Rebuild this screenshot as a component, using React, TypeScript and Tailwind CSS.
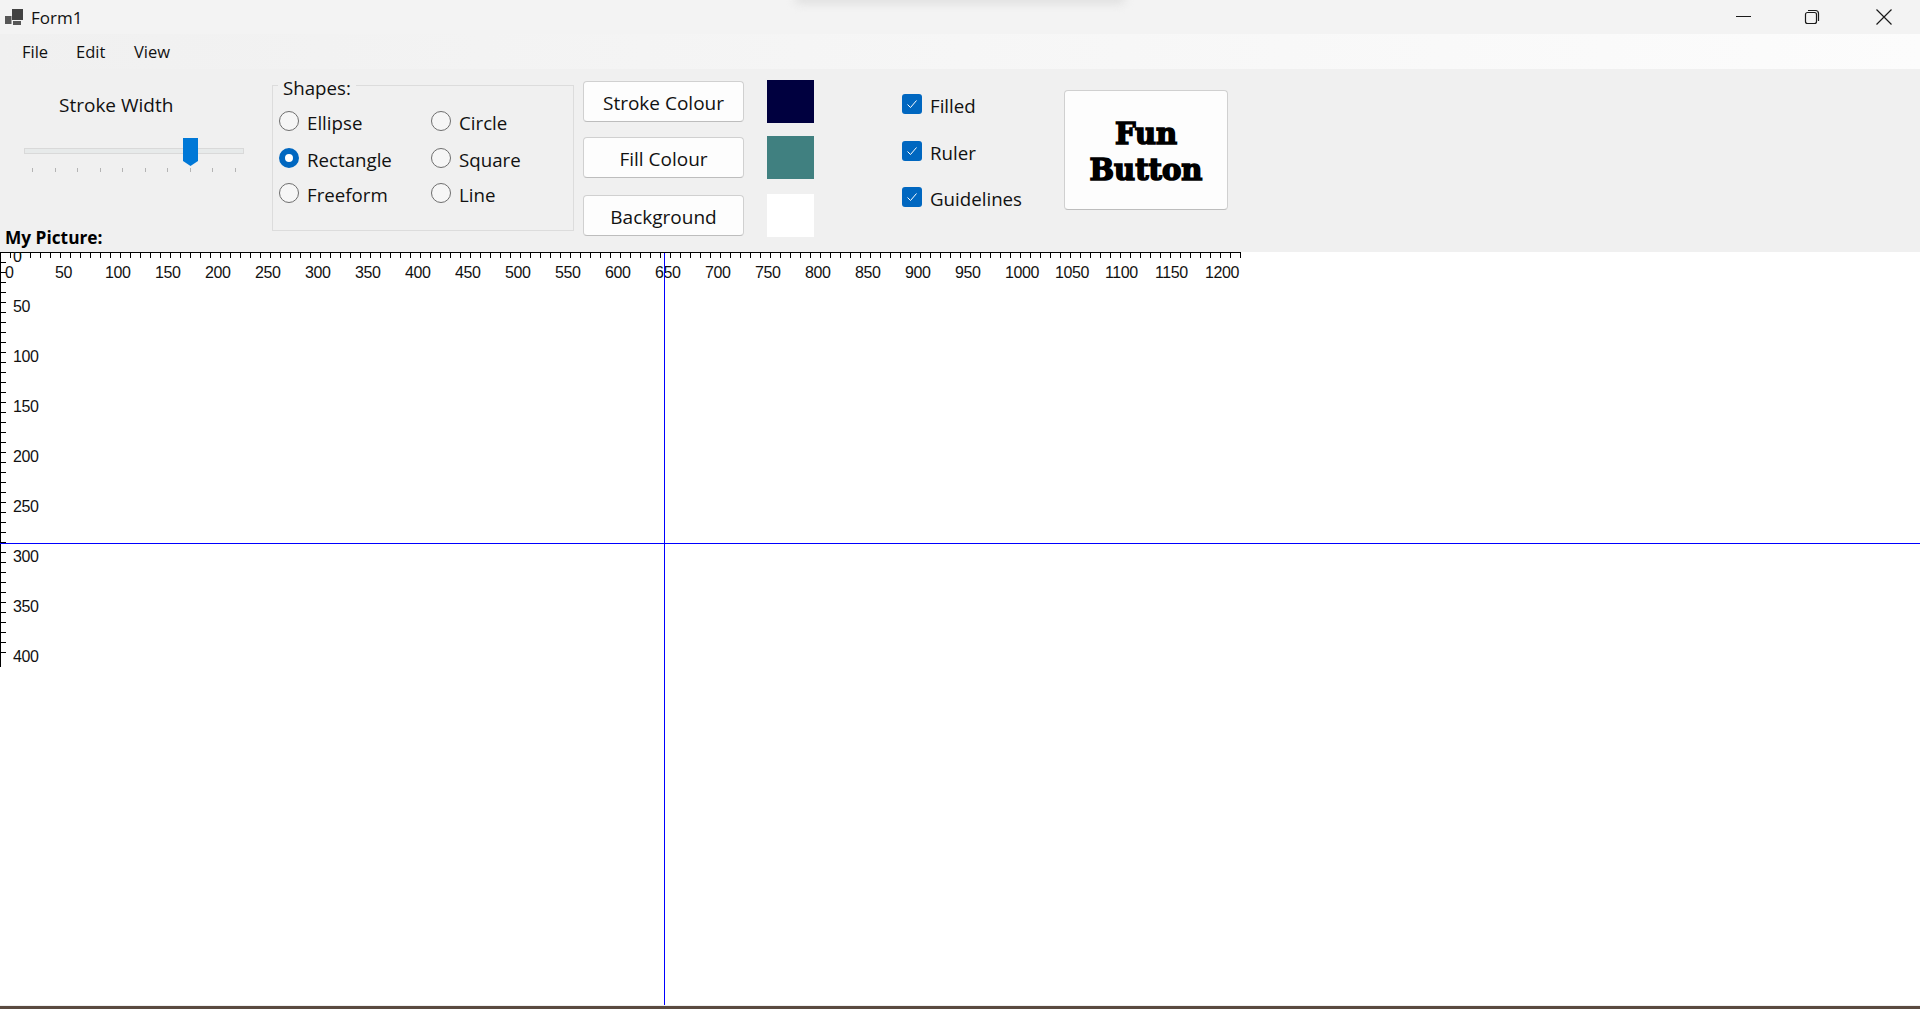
import type { ReactNode } from 'react';

const uiFont = "font-['Open_Sans','Noto_Sans',sans-serif]";

const xLabels = Array.from({ length: 25 }, (_, i) => i * 50);
const yLabels = Array.from({ length: 9 }, (_, i) => i * 50);

function FormIcon() {
  return (
    <svg width="19" height="17" viewBox="0 0 19 17" className="ml-[5px] mr-[7px]">
      <rect x="7" y="0" width="11" height="11" fill="#424242" />
      <rect x="0" y="7" width="6.5" height="8" fill="#565656" />
      <rect x="8" y="12" width="8" height="4" fill="#565656" />
    </svg>
  );
}

function WindowControls() {
  return (
    <svg width="170" height="20" viewBox="0 0 170 20" className="ml-auto mr-[14px]" fill="none" stroke="#1a1a1a">
      <path d="M0 9.5H15" />
      <rect x="69.5" y="5.5" width="11" height="11" rx="2" strokeWidth="1.2" />
      <path d="M72 3.5h7.5a3 3 0 0 1 3 3V14" strokeWidth="1.2" />
      <path d="M140.5 2.5l15 15M155.5 2.5l-15 15" strokeWidth="1.2" />
    </svg>
  );
}

function StrokeSlider() {
  return (
    <div className="ml-[24px] mt-[30px] w-[220px]">
      <div className="relative h-[6px] border border-[#d9d9d9] bg-[#e7eaea]">
        <svg width="15" height="28" viewBox="0 0 15 28" className="absolute left-[158px] top-[-11px]">
          <path d="M0 0H15V23L7.5 28L0 23Z" fill="#0078d7" />
        </svg>
      </div>
      <div className="mt-[14px] flex justify-between pl-[8px] pr-[8px]">
        {Array.from({ length: 10 }, (_, i) => (
          <div key={i} className="h-[4px] w-px bg-[#b4b4b4]" />
        ))}
      </div>
    </div>
  );
}

function ShapeRadio({ label, checked }: { label: string; checked?: boolean }) {
  return (
    <div className="flex h-[20px] items-center">
      {checked ? (
        <div className="h-[20px] w-[20px] rounded-full border-[6px] border-[#0067c0] bg-white" />
      ) : (
        <div className="h-[20px] w-[20px] rounded-full border border-[#6e6e6e] bg-[#f6f6f6]" />
      )}
      <span className="ml-[8px] mt-[4px] text-[18.7px] leading-[24px] text-[#111]">{label}</span>
    </div>
  );
}

function ActionRow({ label, swatch }: { label: string; swatch: string }) {
  return (
    <div className="flex h-[43px] items-center gap-[23px]">
      <button className="h-[41px] w-[161px] rounded-[4px] border border-[#d0d0d0] border-b-[#bdbdbd] bg-[#fdfdfd] pt-[3px] text-[19px] text-[#111]">
        {label}
      </button>
      <div className={`h-[43px] w-[47px] ${swatch}`} />
    </div>
  );
}

function CheckRow({ children }: { children: ReactNode }) {
  return (
    <div className="flex h-[20px] items-center">
      <div className="flex h-[20px] w-[20px] items-center justify-center rounded-[3px] bg-[#0067c0]">
        <svg width="12" height="12" viewBox="0 0 12 12" fill="none" stroke="#fff" strokeWidth="1">
          <path d="M1.5 6.5L4.5 9.5L10.5 2.5" />
        </svg>
      </div>
      <span className="ml-[8px] mt-[3px] text-[18.7px] leading-[24px] text-[#111]">{children}</span>
    </div>
  );
}

function RulerAndGuides() {
  return (
    <svg width="1920" height="754" viewBox="0 0 1920 754" className="absolute inset-0">
      <g shapeRendering="crispEdges" stroke="#000" fill="none">
        <path d="M0 0.5H1241" />
        <path d="M0.5 0V415" />
        {Array.from({ length: 125 }, (_, i) => (
          <path key={i} d={`M${i * 10 + 0.5} 0V6`} />
        ))}
        {Array.from({ length: 41 }, (_, i) => (
          <path key={i} d={`M0 ${i * 10 + 0.5}H6`} />
        ))}
      </g>
      <g className="font-['Liberation_Sans',Arial,sans-serif] text-[16px] tracking-[-0.4px]" fill="#111">
        {xLabels.map((v) => (
          <text key={v} x={v + 5} y={26}>
            {v}
          </text>
        ))}
        {yLabels.map((v) => (
          <text key={v} x={13} y={v + 10}>
            {v}
          </text>
        ))}
      </g>
      <g shapeRendering="crispEdges" stroke="#0000ff">
        <path d="M664.5 1V753" />
        <path d="M0 291.5H1920" />
      </g>
    </svg>
  );
}

export default function App() {
  return (
    <div className={`relative flex h-[1009px] w-[1920px] flex-col overflow-hidden bg-white text-black ${uiFont}`}>
      {/* shadow peeking in at the top of the window */}
      <div className="absolute left-[795px] top-[-6px] h-[9px] w-[330px] rounded-full bg-[#dcdcdc] blur-[5px]" />

      <div className="flex h-[34px] items-center bg-[#f3f3f3]">
        <FormIcon />
        <span className="pt-px text-[17px] text-[#111]">Form1</span>
        <WindowControls />
      </div>

      <div className="flex h-[35px] items-center bg-gradient-to-r from-[#f0f0f0] to-[#fcfcfc] pl-[22px] pt-[2px] text-[16.5px] text-[#111]">
        <span className="w-[54px]">File</span>
        <span className="w-[58px]">Edit</span>
        <span>View</span>
      </div>

      <div className="flex h-[183px] bg-[#f0f0f0]">
        <div className="flex w-[272px] flex-col">
          <div className="ml-[59px] mt-[23px] h-[26px] text-[19px] leading-[26px] text-[#111]">Stroke Width</div>
          <StrokeSlider />
          <div className="ml-[5px] mt-auto pb-[2px] text-[17.3px] font-bold leading-[24px]">My Picture:</div>
        </div>

        <div className="relative mt-[16px] h-[146px] w-[302px] border border-[#dcdcdc]">
          <span className="absolute left-[5px] top-[-10px] bg-[#f0f0f0] px-[5px] text-[18.7px] leading-[24px] text-[#111]">
            Shapes:
          </span>
          <div className="grid grid-cols-[152px_1fr] grid-rows-[37px_35px_20px] pl-[6px] pt-[25px]">
            <ShapeRadio label="Ellipse" />
            <ShapeRadio label="Circle" />
            <ShapeRadio label="Rectangle" checked />
            <ShapeRadio label="Square" />
            <ShapeRadio label="Freeform" />
            <ShapeRadio label="Line" />
          </div>
        </div>

        <div className="ml-[9px] flex w-[231px] flex-col pt-[11px]">
          <ActionRow label="Stroke Colour" swatch="bg-[#00003f]" />
          <div className="mt-[13px]">
            <ActionRow label="Fill Colour" swatch="bg-[#408080]" />
          </div>
          <div className="mt-[15px]">
            <ActionRow label="Background" swatch="bg-white" />
          </div>
        </div>

        <div className="ml-[88px] flex w-[162px] flex-col pt-[25px]">
          <CheckRow>Filled</CheckRow>
          <div className="mt-[27px]">
            <CheckRow>Ruler</CheckRow>
          </div>
          <div className="mt-[26px]">
            <CheckRow>Guidelines</CheckRow>
          </div>
        </div>

        <button className="mt-[21px] h-[120px] w-[164px] rounded-[4px] border border-[#d0d0d0] border-b-[#bdbdbd] bg-[#fdfdfd] pt-[4px] font-['DejaVu_Serif',serif] text-[29px] font-bold leading-[36px] text-black [-webkit-text-stroke:1.6px_black]">
          Fun
          <br />
          Button
        </button>
      </div>

      <div className="relative flex-1 bg-white">
        <RulerAndGuides />
      </div>
      <div className="h-px bg-[#f0f0f0]" />
      <div className="h-[3px] bg-[#5a4a40]" />
    </div>
  );
}
